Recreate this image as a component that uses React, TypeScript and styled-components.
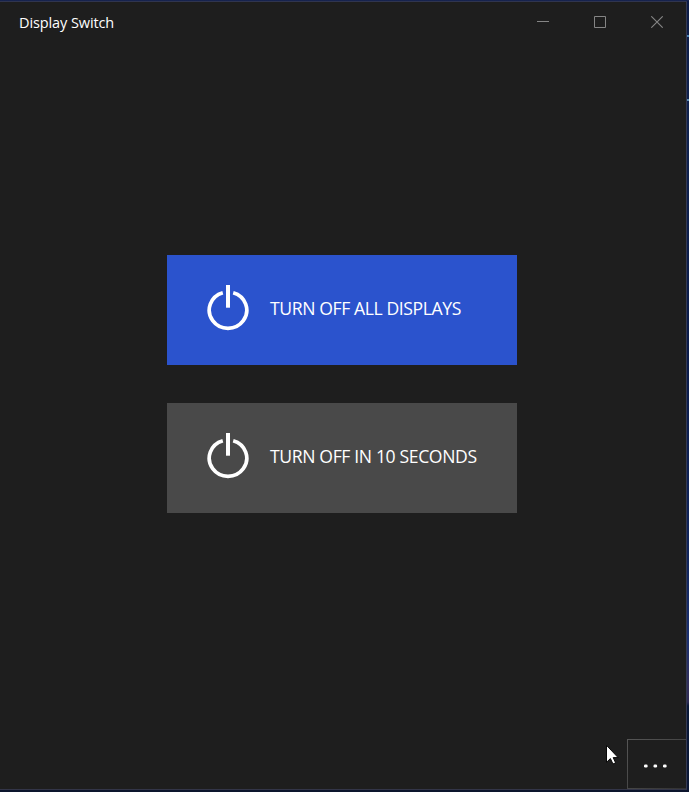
import React from 'react';
import styled, { createGlobalStyle } from 'styled-components';

const GlobalStyle = createGlobalStyle`
  * { box-sizing: border-box; }
  html, body { margin: 0; padding: 0; overflow: hidden; }
  body { font-family: "Open Sans", "Noto Sans", sans-serif; }
`;

const Desktop = styled.div`
  width: 689px;
  height: 792px;
  padding: 1px 2px 2px 0;
  background:
    linear-gradient(#4a83b5, #4a83b5) 687px 35px / 2px 2px no-repeat,
    linear-gradient(#5b8fb5, #5b8fb5) 687px 99px / 2px 2px no-repeat,
    linear-gradient(#1a2752, #131f4b) 0 0 / 100% 1px no-repeat,
    linear-gradient(#0c152d, #0c152d) 0 790px / 100% 2px no-repeat,
    linear-gradient(180deg, #0c1c47 0, #10234f 130px, #0b1c4a 350px, #11265c 560px, #1b3170 640px, #33305a 685px, #2f2c55 702px, #081838 706px, #0c1836 100%);
`;

const Window = styled.main`
  height: 789px;
  display: flex;
  flex-direction: column;
  background: #1e1e1e;
  border: solid #30354f;
  border-width: 1px 1px 1px 0;
  border-right-color: #363a52;
  border-bottom-color: #333548;
`;

const TitleBar = styled.header`
  height: 40px;
  display: flex;
  justify-content: space-between;
  flex: none;
`;

const Title = styled.h1`
  margin: 0;
  padding-left: 19px;
  font-size: 14.5px;
  line-height: 41px;
  font-weight: 400;
  letter-spacing: -0.1px;
  color: #fff;
`;

const Controls = styled.div`
  display: flex;
`;

const ControlButton = styled.button`
  width: 57px;
  height: 40px;
  padding: 0;
  border: 0;
  background: none;
  color: #858585;
  display: grid;
  place-items: center;
  svg { display: block; }
`;

const Content = styled.section`
  flex: 1;
  display: flex;
  flex-direction: column;
  align-items: flex-start;
  gap: 38px;
  padding: 213px 0 0 167px;
`;

const ActionButton = styled.button<{ $primary?: boolean }>`
  width: 350px;
  height: 110px;
  display: flex;
  align-items: center;
  gap: 21px;
  padding: 0 0 0 40px;
  border: 0;
  background: ${({ $primary }) => ($primary ? '#2b53cd' : '#494949')};
  color: #fff;
  svg { flex: none; display: block; margin-bottom: 4px; }
`;

const ActionLabel = styled.span<{ $spacing: number }>`
  font-family: "Open Sans", "Noto Sans", sans-serif;
  font-size: 17.6px;
  line-height: 24px;
  margin-top: -4px;
  letter-spacing: ${({ $spacing }) => $spacing}px;
  white-space: nowrap;
`;

const Footer = styled.footer`
  height: 50px;
  flex: none;
  display: flex;
  justify-content: flex-end;
`;

const MoreButton = styled.button`
  width: 59px;
  height: 50px;
  padding: 3px 4px 0 0;
  border: 1px solid #494949;
  border-right: 0;
  border-image: linear-gradient(135deg, #565656, #474747 45%, #303030) 1;
  border-image-width: 1px 0 1px 1px;
  background: #1e1e1e;
  display: grid;
  place-items: center;
  svg { display: block; }
`;

const Cursor = styled.svg`
  position: absolute;
  left: 605px;
  top: 744px;
`;

const PowerIcon = () => (
  <svg width="42" height="46" viewBox="0 0 42 46" fill="none" stroke="#fff" strokeWidth="3.7">
    <path d="M15.8 7.8A18.75 18.1 0 1 0 26.2 7.8" />
    <path d="M21 0V22.7" strokeWidth="4" />
  </svg>
);

export default function App() {
  return (
    <>
      <GlobalStyle />
      <Desktop>
        <Window>
          <TitleBar>
            <Title>Display Switch</Title>
            <Controls>
              <ControlButton aria-label="Minimize">
                <svg width="13" height="12" shapeRendering="crispEdges"><path d="M0 5h12v1H0z" fill="currentColor" /></svg>
              </ControlButton>
              <ControlButton aria-label="Maximize">
                <svg width="13" height="12" fill="none" stroke="currentColor"><path d="M.5.5h11v11H.5z" /></svg>
              </ControlButton>
              <ControlButton aria-label="Close">
                <svg width="13" height="12" fill="none" stroke="currentColor" strokeWidth="1.1"><path d="m.3.3 11.4 11.4M11.7.3.3 11.7" /></svg>
              </ControlButton>
            </Controls>
          </TitleBar>
          <Content>
            <ActionButton $primary>
              <PowerIcon />
              <ActionLabel $spacing={-0.4}>TURN OFF ALL DISPLAYS</ActionLabel>
            </ActionButton>
            <ActionButton>
              <PowerIcon />
              <ActionLabel $spacing={-0.37}>TURN OFF IN 10 SECONDS</ActionLabel>
            </ActionButton>
          </Content>
          <Footer>
            <MoreButton aria-label="More options">
              <svg width="25" height="4" fill="#fff">
                <rect x="1" y=".5" width="3.6" height="3" rx="1.2" />
                <rect x="10.5" y=".5" width="3.6" height="3" rx="1.2" />
                <rect x="20" y=".5" width="3.6" height="3" rx="1.2" />
              </svg>
            </MoreButton>
          </Footer>
        </Window>
      </Desktop>
      <Cursor width="14" height="22" viewBox="0 0 14 22">
        <path d="M1.5 1.3v17l3.9-3.7 2.6 5.4 2.6-1.2-2.4-5.2h4.9z" fill="#fff" stroke="#080808" />
      </Cursor>
    </>
  );
}
